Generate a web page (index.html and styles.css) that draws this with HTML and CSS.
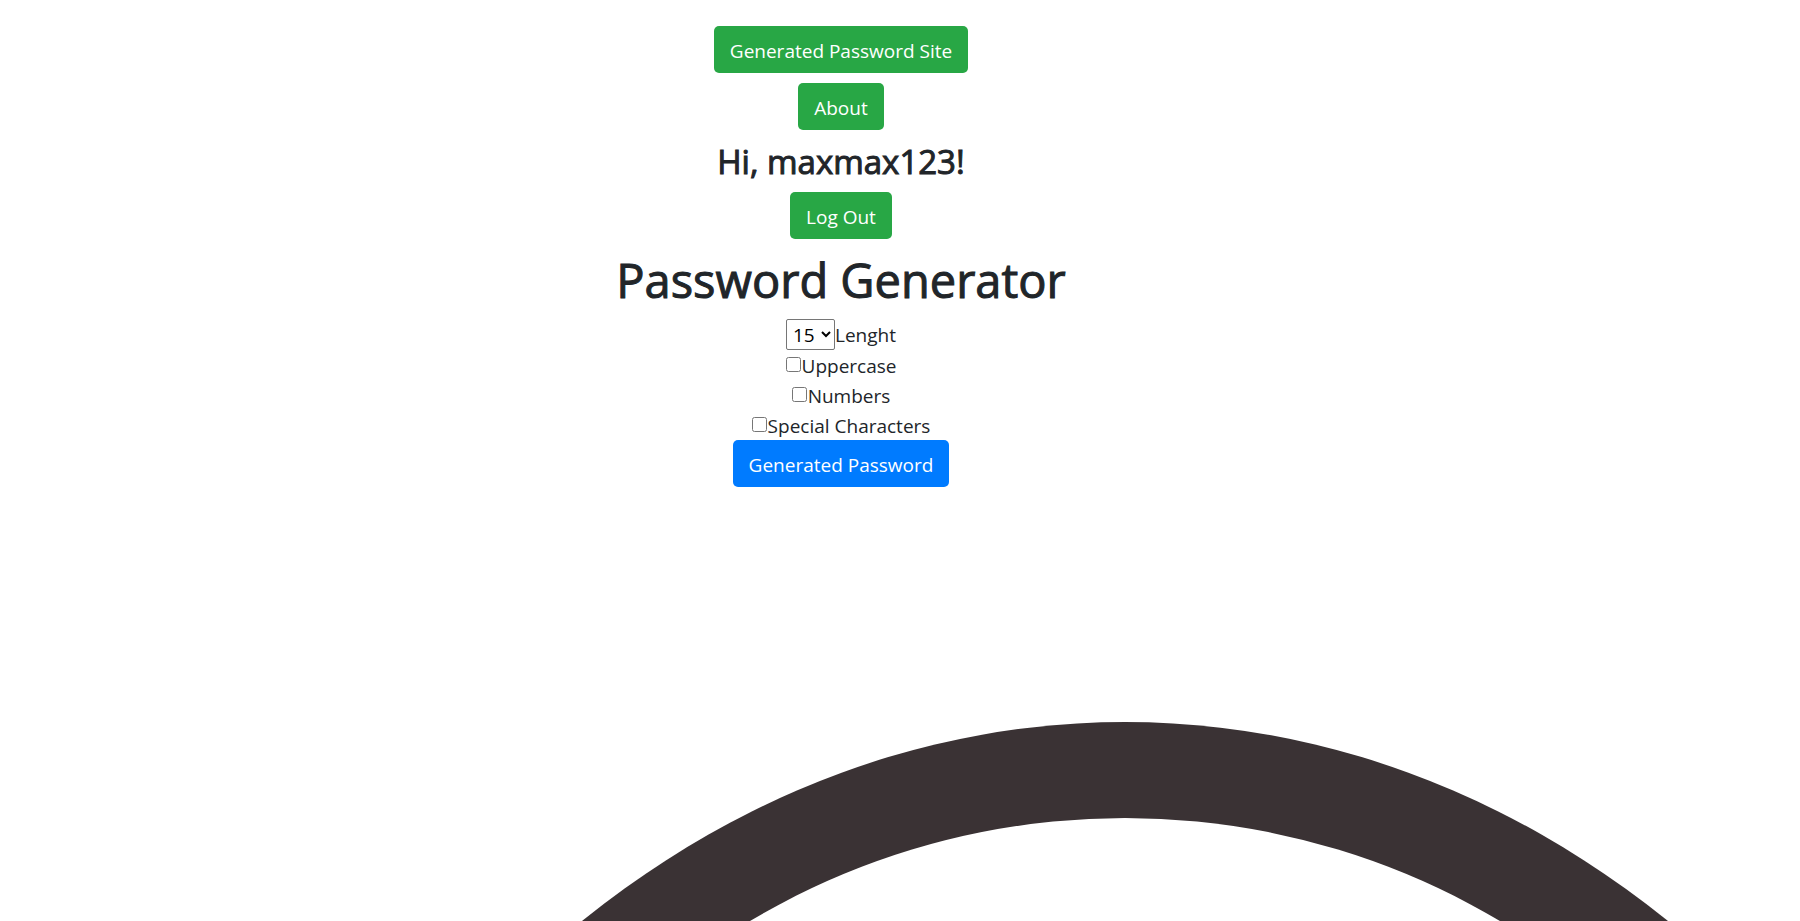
FILE: index.html
```html
<!DOCTYPE html>
<html lang="en">
<head>
<meta charset="utf-8">
<title>Password Generator</title>
<link rel="stylesheet" href="styles.css">
</head>
<body>
<svg class="backdrop" viewBox="0 0 1800 921" preserveAspectRatio="xMidYMax slice" aria-hidden="true">
  <ellipse cx="1125" cy="1894" rx="974" ry="1172" fill="#3a3234"/>
  <circle cx="1125" cy="1552" r="734" fill="#fff"/>
</svg>
<main class="page">
  <nav class="menu">
    <a class="btn btn-success" href="#">Generated Password Site</a>
    <a class="btn btn-success" href="#">About</a>
    <h3 class="greeting">Hi, maxmax123!</h3>
    <a class="btn btn-success" href="#">Log Out</a>
  </nav>
  <h1 class="title">Password Generator</h1>
  <form class="generator">
    <div class="row length-row">
      <select class="length" id="length" name="length"><option>15</option></select><label for="length">Lenght</label>
    </div>
    <div class="row"><input class="check" type="checkbox" id="upper"><label for="upper">Uppercase</label></div>
    <div class="row"><input class="check" type="checkbox" id="numbers"><label for="numbers">Numbers</label></div>
    <div class="row"><input class="check" type="checkbox" id="special"><label for="special">Special Characters</label></div>
    <button class="btn btn-primary" type="button">Generated Password</button>
  </form>
</main>
</body>
</html>
```
FILE: styles.css
```css
* { box-sizing: border-box; }
html { min-height: 100%; }
body {
  margin: 0;
  min-height: 100vh;
  position: relative;
  overflow: hidden;
  background: #fff;
  color: #212529;
  font-family: "Open Sans", "Noto Sans", sans-serif;
  font-size: 19px;
  line-height: 30px;
}
.backdrop {
  position: absolute;
  inset: 0;
  width: 100%;
  height: 100%;
}
.page {
  position: relative;
  padding: 26px 118px 0 0;
  display: flex;
  flex-direction: column;
  align-items: center;
}
.menu {
  display: flex;
  flex-direction: column;
  align-items: center;
  gap: 10px;
}
.btn {
  padding: 10px 16px 7px;
  border: 0;
  border-radius: 5px;
  color: #fff;
  font: inherit;
  text-decoration: none;
  cursor: pointer;
}
.btn-success { background: #28a745; }
.btn-primary { background: #007bff; }
.greeting,
.title {
  padding-top: 2px;
  font-weight: 500;
  -webkit-text-stroke: 1px currentColor;
}
.greeting {
  margin: 0;
  font-size: 33px;
  line-height: 40px;
}
.title {
  margin: 10px 0;
  font-size: 47px;
  line-height: 58px;
}
.generator {
  display: flex;
  flex-direction: column;
  align-items: center;
}
.row {
  display: flex;
  align-items: center;
  height: 30px;
  padding-top: 1px;
}
.length-row {
  height: 31px;
}
.length {
  height: 31px;
  margin: 0 0 1px;
  padding: 0 3px 0 2px;
  border: 1px solid #767676;
  border-radius: 2px;
  background: #fff;
  color: #000;
  font: inherit;
}
.check {
  width: 15px;
  height: 15px;
  margin: 0 1px 2px 0;
}
```
